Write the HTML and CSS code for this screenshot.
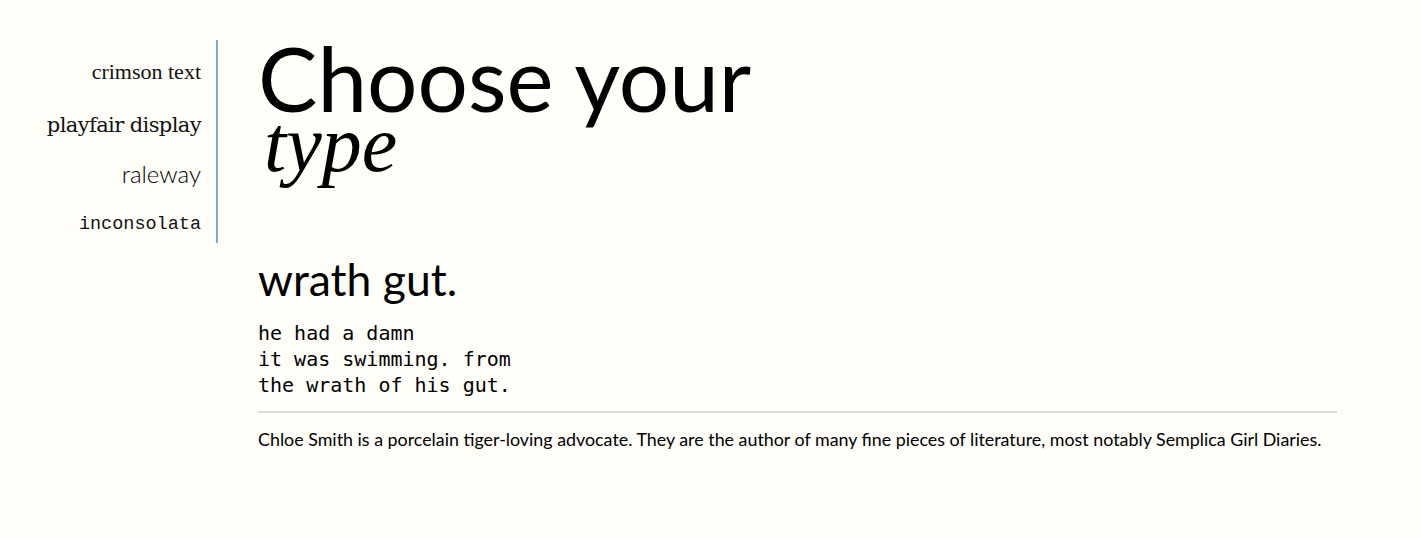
FILE: index.html
```html
<!DOCTYPE html>
<html>
<head>
<meta charset="utf-8">
<link rel="stylesheet" href="styles.css">
</head>
<body>
<div class="page">
  <nav class="fonts">
    <a class="f f-crimson">crimson text</a>
    <a class="f f-playfair">playfair display</a>
    <a class="f f-raleway">raleway</a>
    <a class="f f-incons">inconsolata</a>
  </nav>
  <main class="main">
    <h1 class="title">Choose your<span class="title-em">type</span></h1>
    <h2 class="sub">wrath gut.</h2>
    <pre class="poem">he had a damn
it was swimming. from
the wrath of his gut.</pre>
    <hr class="rule">
    <p class="bio">Chloe Smith is a porcelain tiger-loving advocate. They are the author of many fine pieces of literature, most notably Semplica Girl Diaries.</p>
  </main>
</div>
</body>
</html>
```
FILE: styles.css
```css
html, body { margin: 0; padding: 0; }
body {
  background: #fffef9;
  color: #000;
  font-family: Lato, "Liberation Sans", sans-serif;
}
.page {
  display: flex;
  align-items: flex-start;
  padding-top: 40px;
}
.fonts {
  width: 201px;
  padding-right: 15px;
  border-right: 2px solid #7aaacd;
  display: flex;
  flex-direction: column;
  align-items: flex-end;
  padding-top: 18px;
  padding-bottom: 3px;
}
.f { color: #111; display: block; white-space: nowrap; }
.f-crimson { font-family: "Liberation Serif", serif; font-size: 22px; line-height: 30px; margin-top: -1px; }
.f-playfair { font-family: "DejaVu Serif", serif; font-size: 21px; line-height: 30px; margin-top: 23px; letter-spacing: -0.6px; }
.f-raleway { font-family: Lato, sans-serif; font-weight: 300; color: #000; font-size: 24px; line-height: 30px; margin-top: 19px; }
.f-incons { font-family: "Liberation Mono", monospace; font-size: 18.5px; line-height: 30px; margin-top: 21px; }
.main { margin-left: 40px; flex: 0 0 1079px; }
.title {
  margin: 0;
  font-weight: 400;
  font-size: 89px;
  line-height: 76px;
}
.title-em {
  display: block;
  font-family: "Liberation Serif", serif;
  font-style: italic;
  font-size: 80px;
  line-height: 56px;
  margin-left: 6px;
}
.sub {
  margin: 82px 0 0;
  font-weight: 400;
  font-size: 44.5px;
  line-height: 50px;
}
.poem {
  margin: 16px 0 0;
  font-family: "DejaVu Sans Mono", monospace;
  font-size: 20px;
  line-height: 26px;
}
.rule {
  margin: 13px 0 0;
  border: 0;
  height: 2px;
  background: #dcdcdc;
}
.bio {
  margin: 14px 0 0;
  font-size: 17.85px;
  line-height: 24px;
}
```
